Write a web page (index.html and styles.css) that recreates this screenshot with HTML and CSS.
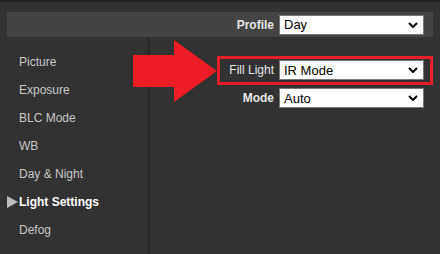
FILE: index.html
```html
<!DOCTYPE html>
<html lang="en">
<head>
    <meta charset="UTF-8">
    <meta name="viewport" content="width=device-width, initial-scale=1.0">
    <title>Light Settings</title>
    <link rel="stylesheet" href="styles.css">
</head>
<body>
    <div class="header">
        <label class="field-label strong">Profile</label>
        <span class="select-wrap">
            <select><option>Day</option></select>
            <svg class="chev" viewBox="0 0 10 6"><path d="M1 1 L5 5 L9 1" /></svg>
        </span>
    </div>

    <div class="layout">
        <ul class="side-menu">
            <li>Picture</li>
            <li>Exposure</li>
            <li>BLC Mode</li>
            <li>WB</li>
            <li>Day &amp; Night</li>
            <li class="active">Light Settings</li>
            <li>Defog</li>
        </ul>

        <div class="main">
            <div class="row highlight">
                <label class="field-label">Fill Light</label>
                <span class="select-wrap">
                    <select><option>IR Mode</option></select>
                    <svg class="chev" viewBox="0 0 10 6"><path d="M1 1 L5 5 L9 1" /></svg>
                </span>
            </div>
            <div class="row">
                <label class="field-label strong">Mode</label>
                <span class="select-wrap">
                    <select><option>Auto</option></select>
                    <svg class="chev" viewBox="0 0 10 6"><path d="M1 1 L5 5 L9 1" /></svg>
                </span>
            </div>
        </div>
    </div>

    <!-- callout arrow pointing at the Fill Light row -->
    <svg class="callout" width="90" height="66" viewBox="0 0 90 66">
        <polygon points="0,15 41,15 41,0 84,31 41,62 41,47 0,47" />
    </svg>
</body>
</html>
```

FILE: styles.css
```css
body {
    margin: 0;
    width: 440px;
    height: 254px;
    background: #323232;
    border-top: 2px solid #1f1f1f;
    box-sizing: border-box;
    font-family: "Liberation Sans", Arial, sans-serif;
    position: relative;
    overflow: hidden;
}
.header {
    margin: 10px 7px 0;
    height: 25px;
    background: #444;
    display: flex;
    align-items: center;
    justify-content: flex-end;
    padding-right: 9px;
}
.field-label {
    color: #e6e6e6;
    font-size: 12px;
    margin-right: 5px;
}
.strong {
    font-weight: bold;
}
.select-wrap {
    position: relative;
    display: inline-block;
}
select {
    appearance: none;
    -webkit-appearance: none;
    width: 145px;
    height: 20px;
    padding: 0 0 0 4px;
    border: 1px solid #777;
    border-radius: 0;
    background: #fff;
    color: #000;
    font-family: "Liberation Sans", Arial, sans-serif;
    font-size: 13px;
    display: block;
}
.chev {
    position: absolute;
    right: 6px;
    top: 7px;
    width: 10px;
    height: 6px;
    fill: none;
    stroke: #000;
    stroke-width: 2;
    pointer-events: none;
}
.layout {
    display: flex;
    height: 217px;
}
.side-menu {
    list-style: none;
    margin: 0;
    padding: 11px 0 0;
    width: 150px;
    border-right: 3px solid #2a2a2a;
    box-sizing: border-box;
    flex-shrink: 0;
}
.side-menu li {
    height: 28px;
    line-height: 28px;
    padding-left: 19px;
    color: #c8c8c8;
    font-size: 12px;
    position: relative;
}
.side-menu li.active {
    color: #fff;
    font-weight: bold;
}
.side-menu li.active::before {
    content: "";
    position: absolute;
    left: 7px;
    top: 8px;
    border-left: 11px solid #bbb;
    border-top: 6px solid transparent;
    border-bottom: 6px solid transparent;
}
.main {
    flex: 1;
    padding-top: 19px;
    padding-right: 7px;
    display: flex;
    flex-direction: column;
    align-items: flex-end;
}
.row {
    display: flex;
    align-items: center;
    justify-content: flex-end;
    padding: 3px 9px 0 0;
}
.row.highlight {
    border: 3px solid #e5202a;
    padding: 1px 6px 2px 0;
    width: 216px;
    box-sizing: border-box;
}
.callout {
    position: absolute;
    left: 133px;
    top: 38px;
    fill: #ee1c25;
}
```
